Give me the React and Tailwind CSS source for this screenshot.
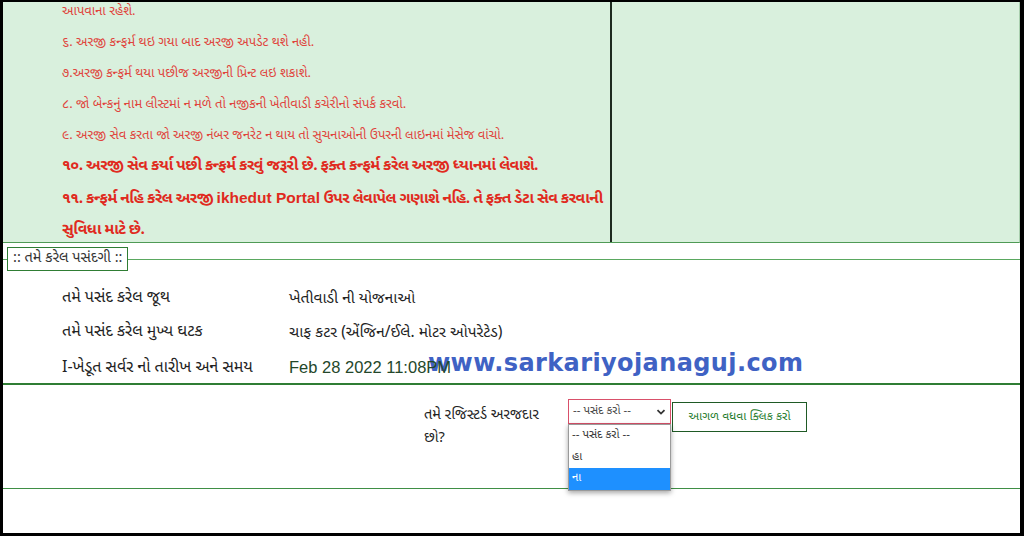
import React from "react";

const guj = { fontFamily: '"Noto Sans Gujarati", "Lohit Gujarati", "Noto Sans", "Liberation Sans", sans-serif' };

export default function App() {
  return (
    <div className="w-[1024px] h-[536px] overflow-hidden bg-black">
      <div className="ml-[3px] mt-[2px] w-[1017px] h-[531px] bg-white flex flex-col relative" style={guj}>
        {/* top instructions */}
        <div className="h-[241px] flex bg-[#d9f0dd] border-b border-[#4f9a55] border-r border-r-[#a9cfae]">
          <div className="w-[609px] border-r-2 border-[#1d2a1f] pl-[59px] overflow-hidden">
            <div className="-mt-[6px] text-[13px] text-[#e0443c] leading-[31px]">
              <div>આપવાના રહેશે.</div>
              <div>૬. અરજી કન્ફર્મ થઇ ગયા બાદ અરજી અપડેટ થશે નહી.</div>
              <div>૭.અરજી કન્ફર્મ થયા પછીજ અરજીની પ્રિન્ટ લઇ શકાશે.</div>
              <div>૮. જો બેન્કનું નામ લીસ્ટમાં ન મળે તો નજીકની ખેતીવાડી કચેરીનો સંપર્ક કરવો.</div>
              <div>૯. અરજી સેવ કરતા જો અરજી નંબર જનરેટ ન થાય તો સુચનાઓની ઉપરની લાઇનમાં મેસેજ વાંચો.</div>
            </div>
            <div className="text-[15.5px] font-bold text-[#e02a20] leading-[31px] tracking-[-0.5px] pr-0">
              <div>૧૦. અરજી સેવ કર્યા પછી કન્ફર્મ કરવું જરૂરી છે. ફક્ત કન્ફર્મ કરેલ અરજી ધ્યાનમાં લેવાશે.</div>
              <div>
                ૧૧. કન્ફર્મ નહિ કરેલ અરજી <span className="tracking-normal" style={{ fontFamily: '"Liberation Sans", sans-serif' }}>ikhedut Portal</span> ઉપર લેવાપેલ ગણાશે નહિ. તે ફક્ત ડેટા સેવ કરવાની સુવિધા માટે છે.
              </div>
            </div>
          </div>
          <div className="flex-1" />
        </div>

        {/* selection fieldset */}
        <fieldset className="mt-[4px] border-t border-b-2 border-x-0 border-t-[#5aa860] border-b-[#2f7d34] pb-0 min-w-0">
          <legend className="ml-[4px] px-[5px] h-[24px] border border-[#2f7d34] text-[14.5px] text-[#333] leading-[22px]">
            :: તમે કરેલ પસંદગી ::
          </legend>
          <div className="grid grid-cols-[227px_1fr] grid-rows-[34px_34px_33px] pl-[59px] pt-[11px] text-[16px] text-[#222] leading-[34px]">
            <div>તમે પસંદ કરેલ જૂથ</div>
            <div className="text-[15.5px]">ખેતીવાડી ની યોજનાઓ</div>
            <div>તમે પસંદ કરેલ મુખ્ય ઘટક</div>
            <div className="text-[15.5px]">ચાફ કટર (એંજિન/ઈલે. મોટર ઓપરેટેડ)</div>
            <div className="pt-[2px]">I-ખેડૂત સર્વર નો તારીખ અને સમય</div>
            <div className="relative">
              <span
                className="absolute left-[139px] top-[-4px] text-[24px] font-bold text-[#3f62c4] tracking-[0.4px]"
                style={{ fontFamily: '"DejaVu Sans", "Liberation Sans", sans-serif' }}
              >
                www.sarkariyojanaguj.com
              </span>
              <span className="relative text-[#24472a] text-[16.5px]" style={{ fontFamily: '"Liberation Sans", Arial, sans-serif' }}>Feb 28 2022 11:08PM</span>
            </div>
          </div>
        </fieldset>

        {/* registration */}
        <div className="h-[104px] border-b border-[#3f8f45] flex pl-[421px] pt-[14px]">
          <div className="w-[132px] text-[14.5px] text-[#222] leading-[23px] pt-[5px]">
            તમે રજિસ્ટર્ડ અરજદાર છો?
          </div>
          <div className="ml-[12px] relative">
            <div className="w-[103px] h-[25px] border border-[#d9506a] bg-white flex items-center justify-between px-[4px] text-[11.5px] text-[#444]">
              <span>-- પસંદ કરો --</span>
              <svg width="10" height="8" viewBox="0 0 10 8"><path d="M1.5 2.2 L5 5.6 L8.5 2.2" stroke="#333" strokeWidth="1.8" fill="none" /></svg>
            </div>
            <div className="absolute top-[25px] left-0 w-[103px] bg-white border border-[#9a9a9a] shadow-[0_2px_5px_rgba(0,0,0,0.35)] text-[11.5px] text-[#333] z-10">
              <div className="h-[22px] px-[3px] leading-[22px]">-- પસંદ કરો --</div>
              <div className="h-[21px] px-[3px] leading-[21px]">હા</div>
              <div className="h-[22px] px-[3px] leading-[22px] bg-[#1e90ff] text-white">ના</div>
            </div>
          </div>
          <div className="ml-[1px] mt-[3px] h-[30px] w-[135px] border border-[#1f5a25] flex items-center justify-center text-[12px] text-[#1c7a2a]">
            આગળ વધવા ક્લિક કરો
          </div>
        </div>
        <div className="flex-1" />
      </div>
    </div>
  );
}
